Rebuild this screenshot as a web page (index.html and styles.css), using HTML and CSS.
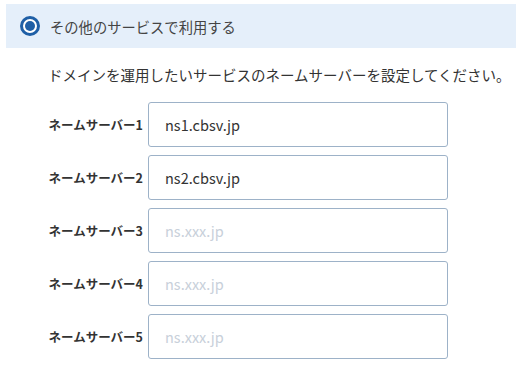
FILE: index.html
```html
<!DOCTYPE html>
<html lang="ja">
<head>
    <meta charset="UTF-8">
    <meta name="viewport" content="width=device-width, initial-scale=1.0">
    <title>ネームサーバー設定</title>
    <link rel="stylesheet" href="styles.css">
</head>
<body>
    <div class="option-head">
        <span class="radio"><span class="radio-dot"></span></span>
        <span class="option-label">その他のサービスで利用する</span>
    </div>

    <p class="note">ドメインを運用したいサービスのネームサーバーを設定してください。</p>

    <div class="ns-form">
        <label class="ns-label" for="ns1">ネームサーバー1</label>
        <input class="ns-input" id="ns1" type="text" value="ns1.cbsv.jp" placeholder="ns.xxx.jp">

        <label class="ns-label" for="ns2">ネームサーバー2</label>
        <input class="ns-input" id="ns2" type="text" value="ns2.cbsv.jp" placeholder="ns.xxx.jp">

        <label class="ns-label" for="ns3">ネームサーバー3</label>
        <input class="ns-input" id="ns3" type="text" placeholder="ns.xxx.jp">

        <label class="ns-label" for="ns4">ネームサーバー4</label>
        <input class="ns-input" id="ns4" type="text" placeholder="ns.xxx.jp">

        <label class="ns-label" for="ns5">ネームサーバー5</label>
        <input class="ns-input" id="ns5" type="text" placeholder="ns.xxx.jp">
    </div>
</body>
</html>
```

FILE: styles.css
```css
body {
    font-family: "Noto Sans CJK JP", "Noto Sans", sans-serif;
    background-color: #fff;
    color: #333;
    margin: 0;
    padding: 0;
}

.option-head {
    display: flex;
    align-items: center;
    gap: 10px;
    height: 44px;
    margin: 4px 1px 0 6px;
    padding-left: 14px;
    background-color: #e5effa;
}

.radio {
    display: flex;
    align-items: center;
    justify-content: center;
    box-sizing: border-box;
    width: 20px;
    height: 20px;
    border: 3px solid #1f5fa6;
    border-radius: 50%;
    background-color: #fff;
}

.radio-dot {
    width: 10px;
    height: 10px;
    border-radius: 50%;
    background-color: #1f5fa6;
}

.option-label {
    font-size: 14.3px;
    color: #444;
}

.note {
    margin: 17px 0 0 48px;
    font-size: 14.5px;
    line-height: 20px;
    color: #333;
}

.ns-form {
    display: grid;
    grid-template-columns: 143px 300px;
    column-gap: 5px;
    row-gap: 8px;
    align-items: center;
    margin-top: 17px;
}

.ns-label {
    text-align: right;
    font-size: 12.5px;
    font-weight: bold;
    color: #333;
}

.ns-input {
    box-sizing: border-box;
    width: 300px;
    height: 45px;
    margin: 0;
    padding: 0 16px;
    border: 1px solid #9db2c8;
    border-radius: 3px;
    font-family: inherit;
    font-size: 14.5px;
    color: #333;
    outline: none;
}

.ns-input::placeholder {
    color: #c8d0da;
}
```
